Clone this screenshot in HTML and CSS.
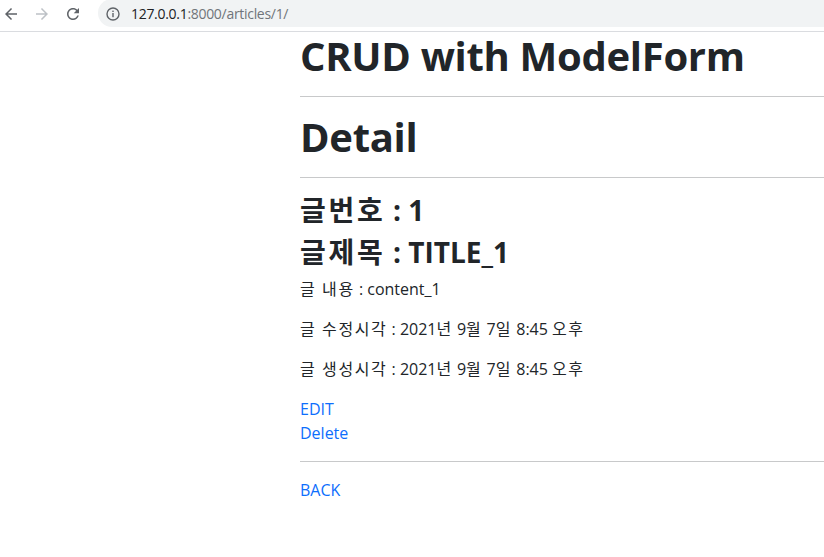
FILE: index.html
```html
<!DOCTYPE html>
<html lang="ko">
<head>
<meta charset="utf-8">
<title>CRUD with ModelForm</title>
<link rel="stylesheet" href="styles.css">
</head>
<body>
<header class="toolbar">
  <div class="nav">
    <span class="nav-btn">
      <svg width="18" height="18" viewBox="0 0 24 24"><path fill="#5f6368" d="M20 11H7.83l5.59-5.59L12 4l-8 8 8 8 1.41-1.41L7.83 13H20v-2z"/></svg>
    </span>
    <span class="nav-btn">
      <svg width="18" height="18" viewBox="0 0 24 24"><path fill="#bdc1c6" d="M4 11h12.17l-5.59-5.59L12 4l8 8-8 8-1.41-1.41L16.17 13H4v-2z"/></svg>
    </span>
    <span class="nav-btn">
      <svg width="18" height="18" viewBox="0 0 24 24"><path fill="#5f6368" d="M17.65 6.35C16.2 4.9 14.21 4 12 4c-4.42 0-7.99 3.58-7.99 8s3.57 8 7.99 8c3.730 0 6.84-2.55 7.73-6h-2.08c-.82 2.33-3.04 4-5.65 4-3.31 0-6-2.690-6-6s2.69-6 6-6c1.66 0 3.14.69 4.22 1.78L13 11h7V4l-2.35 2.35z"/></svg>
    </span>
  </div>
  <div class="omnibox">
    <svg class="info" width="14" height="14" viewBox="0 0 14 14"><circle cx="7" cy="7" r="6" fill="none" stroke="#5f6368" stroke-width="1.4"/><rect x="6.3" y="6" width="1.4" height="4.2" fill="#5f6368"/><rect x="6.3" y="3.6" width="1.4" height="1.4" fill="#5f6368"/></svg>
    <span class="url"><span class="host">127.0.0.1</span>:8000/articles/1/</span>
  </div>
</header>
<main class="page">
  <h1 class="title">CRUD with ModelForm</h1>
  <hr class="rule">
  <h1 class="title">Detail</h1>
  <hr class="rule">
  <h3 class="sub"><span class="ko">글번호</span> : 1</h3>
  <h3 class="sub"><span class="ko">글제목</span> : TITLE_1</h3>
  <p class="line"><span class="ko">글 내용</span> : content_1</p>
  <p class="line"><span class="ko">글 수정시각</span> : 2021<span class="ko">년</span> 9<span class="ko">월</span> 7<span class="ko">일</span> 8:45 <span class="ko">오후</span></p>
  <p class="line"><span class="ko">글 생성시각</span> : 2021<span class="ko">년</span> 9<span class="ko">월</span> 7<span class="ko">일</span> 8:45 <span class="ko">오후</span></p>
  <div class="actions">
    <a class="link" href="#">EDIT</a>
    <a class="link" href="#">Delete</a>
  </div>
  <hr class="rule">
  <a class="link" href="#">BACK</a>
</main>
</body>
</html>
```

FILE: styles.css
```css
html, body {
  margin: 0;
  padding: 0;
  background: #fff;
  overflow: hidden;
}
body {
  font-family: "Open Sans", "Noto Sans CJK KR", sans-serif;
  font-size: 16px;
  line-height: 1.5;
  color: #212529;
}
.toolbar {
  display: flex;
  align-items: flex-start;
  height: 31px;
  border-bottom: 1px solid #dadce0;
}
.nav {
  display: flex;
  width: 96px;
  padding-left: 2px;
  height: 27px;
  align-items: center;
  gap: 13px;
}
.nav-btn {
  width: 18px;
  display: flex;
  justify-content: center;
  align-items: center;
}
.omnibox {
  flex: 1;
  height: 28px;
  margin-top: -1px;
  background: #f1f3f4;
  border-radius: 14px 0 0 14px;
  display: flex;
  align-items: center;
  padding-left: 8px;
}
.info { margin-right: 11px; margin-top: 1px; }
.url {
  font-family: "Open Sans", sans-serif;
  font-size: 14px;
  color: #70757a;
  letter-spacing: -0.3px;
  margin-top: 1px;
}
.host { color: #202124; }
.page {
  margin-left: 300px;
}
.title {
  font-size: 40px;
  font-weight: 700;
  line-height: 1.2;
  margin: 0 0 8px;
  letter-spacing: -0.3px;
}
.rule {
  margin: 16px 0;
  border: 0;
  border-top: 1px solid #c8c9ca;
  height: 0;
}
.sub {
  font-size: 28px;
  font-weight: 700;
  line-height: 1.2;
  margin: 0 0 8px;
}
.ko {
  letter-spacing: 0.1em;
}
.line {
  margin: 0 0 16px;
}
.actions {
  margin: 0;
}
.link {
  display: block;
  color: #0d6efd;
  text-decoration: none;
  width: max-content;
}
```
